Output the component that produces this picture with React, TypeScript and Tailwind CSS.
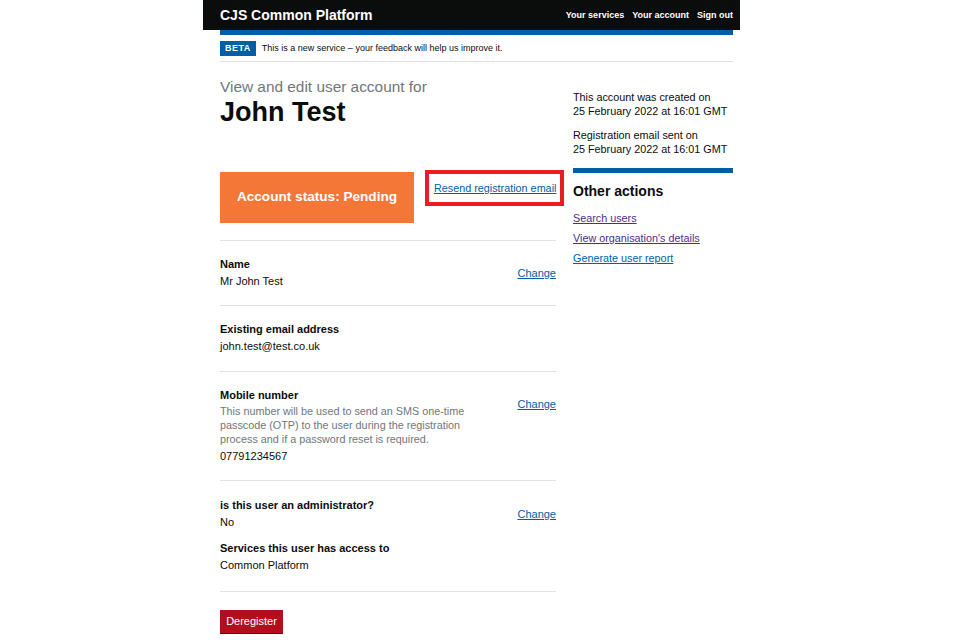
import React from "react";

const font = { fontFamily: '"Liberation Sans", Arial, sans-serif' };

function Row({
  label,
  children,
  change = true,
  pb = "pb-[17px]",
  pt = "pt-[15px]",
}: {
  label: string;
  children: React.ReactNode;
  change?: boolean;
  pb?: string;
  pt?: string;
}) {
  return (
    <div className={`flex justify-between border-t border-[#e2e2e2] ${pt} ${pb}`}>
      <div className="flex flex-col">
        <div className="text-[11px] leading-[17px] font-bold text-[#0b0c0c]">{label}</div>
        {children}
      </div>
      {change && (
        <a href="#" className="mt-[9px] text-[11px] leading-[16px] text-[#005ea5] underline h-[16px]">
          Change
        </a>
      )}
    </div>
  );
}

export default function App() {
  return (
    <div className="w-[960px] h-[640px] bg-white overflow-hidden" style={font}>
      <div className="ml-[203px] w-[537px]">
        {/* Header */}
        <div className="h-[30px] bg-[#0b0c0c] flex items-center justify-between pl-[17px] pr-[7px]">
          <span className="text-white font-bold text-[14px] leading-none">CJS Common Platform</span>
          <nav className="flex gap-[8px] text-white font-bold text-[9px] leading-none">
            <span>Your services</span>
            <span>Your account</span>
            <span>Sign out</span>
          </nav>
        </div>
        <div className="pl-[17px] pr-[7px]">
          <div className="h-[5px] bg-[#005ea5]" />
          {/* Beta banner */}
          <div className="flex items-center gap-[6px] pt-[6px] pb-[5px] border-b border-[#e2e2e2]">
            <span className="bg-[#005ea5] text-white font-bold text-[9px] leading-[15px] h-[15px] px-[5px] tracking-[0.5px]">
              BETA
            </span>
            <span className="text-[9px] leading-[15px] text-[#0b0c0c]">
              This is a new service – your feedback will help us improve it.
            </span>
          </div>

          {/* Main */}
          <div className="flex gap-[17px]">
            {/* Left column */}
            <div className="w-[336px] shrink-0 pt-[15px]">
              <div className="text-[15.4px] leading-[20px] text-[#6f777b]">View and edit user account for</div>
              <h1 className="text-[27px] leading-[30px] font-bold text-[#0b0c0c]">John Test</h1>

              <div className="flex items-start mt-[45px] mb-[17px] w-[344px]">
                <div className="w-[194px] h-[51px] shrink-0 bg-[#f47738] flex items-center justify-center text-white font-bold text-[13.6px]">
                  Account status: Pending
                </div>
                <div className="ml-[11px] -mt-[2px] shrink-0 border-[4px] border-[#ec1c24] w-[139px] h-[36px] flex items-center pl-[5px]">
                  <a href="#" className="text-[10.8px] leading-[14px] text-[#005ea5] underline whitespace-nowrap">
                    Resend registration email
                  </a>
                </div>
              </div>

              <Row label="Name" pb="pb-[16px]">
                <div className="text-[11px] leading-[16px] text-[#0b0c0c]">Mr John Test</div>
              </Row>
              <Row label="Existing email address" change={false}>
                <div className="text-[11px] leading-[16px] text-[#0b0c0c]">john.test@test.co.uk</div>
              </Row>
              <Row label="Mobile number" pb="pb-[16px]">
                <div className="text-[10.8px] leading-[14px] text-[#6f777b] w-[250px]">
                  This number will be used to send an SMS one-time passcode (OTP) to the user during the registration
                  process and if a password reset is required.
                </div>
                <div className="mt-[2px] text-[11px] leading-[16px] text-[#0b0c0c]">07791234567</div>
              </Row>
              <Row label="is this user an administrator?" pt="pt-[16px]" pb="pb-[18px]">
                <div className="text-[11px] leading-[16px] text-[#0b0c0c]">No</div>
                <div className="mt-[10px] text-[11px] leading-[17px] font-bold text-[#0b0c0c]">
                  Services this user has access to
                </div>
                <div className="text-[11px] leading-[16px] text-[#0b0c0c]">Common Platform</div>
              </Row>
              <div className="border-t border-[#e2e2e2] pt-[16px]">
                <button className="h-[23px] w-[63px] bg-[#b10e1e] text-white text-[11px] leading-[23px] shadow-[0_1px_0_#6a0812]">
                  Deregister
                </button>
              </div>
            </div>

            {/* Right column */}
            <div className="w-[160px] shrink-0 pt-[28px]">
              <p className="text-[10.8px] leading-[14px] text-[#0b0c0c]">
                This account was created on
                <br />
                25 February 2022 at 16:01 GMT
              </p>
              <p className="mt-[10px] text-[10.8px] leading-[14px] text-[#0b0c0c]">
                Registration email sent on
                <br />
                25 February 2022 at 16:01 GMT
              </p>
              <div className="mt-[12px] h-[5px] bg-[#005ea5]" />
              <h2 className="mt-[9px] text-[14px] leading-[18px] font-bold text-[#0b0c0c]">Other actions</h2>
              <div className="mt-[11px] flex flex-col gap-[6px]">
                <a href="#" className="text-[10.8px] leading-[14px] text-[#4c2c92] underline">Search users</a>
                <a href="#" className="text-[10.8px] leading-[14px] text-[#4c2c92] underline">View organisation's details</a>
                <a href="#" className="text-[10.8px] leading-[14px] text-[#005ea5] underline">Generate user report</a>
              </div>
            </div>
          </div>
        </div>
      </div>
    </div>
  );
}
